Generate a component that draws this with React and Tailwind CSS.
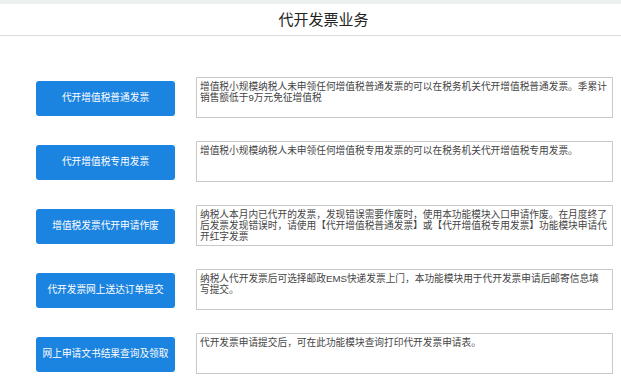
const ROWS = [
    {
        label: '代开增值税普通发票',
        desc: '增值税小规模纳税人未申领任何增值税普通发票的可以在税务机关代开增值税普通发票。季累计销售额低于9万元免征增值税'
    },
    {
        label: '代开增值税专用发票',
        desc: '增值税小规模纳税人未申领任何增值税专用发票的可以在税务机关代开增值税专用发票。'
    },
    {
        label: '增值税发票代开申请作废',
        desc: '纳税人本月内已代开的发票，发现错误需要作废时，使用本功能模块入口申请作废。在月度终了后发票发现错误时，请使用【代开增值税普通发票】或【代开增值税专用发票】功能模块申请代开红字发票'
    },
    {
        label: '代开发票网上送达订单提交',
        desc: '纳税人代开发票后可选择邮政EMS快递发票上门，本功能模块用于代开发票申请后邮寄信息填写提交。'
    },
    {
        label: '网上申请文书结果查询及领取',
        desc: '代开发票申请提交后，可在此功能模块查询打印代开发票申请表。'
    }
];

function App(){
    return (
        <div
            className="w-[621px] h-[386px] bg-white overflow-hidden"
            style={{fontFamily: '"Liberation Sans", "Noto Sans CJK SC", sans-serif'}}
        >
            {/* header */}
            <div className="h-[4px] bg-[#eceff0]"></div>
            <div className="h-[32px] flex items-center justify-center pl-[26px] border-b border-[#dcdcdc]">
                <h1 className="text-[15px] leading-none font-normal text-[#222]">代开发票业务</h1>
            </div>

            {/* rows */}
            <div className="mt-[41px] flex flex-col gap-[23px]">
                {ROWS.map((row) => (
                    <div key={row.label} className="flex items-start pl-[36px]">
                        <button className="mt-[4px] w-[139px] h-[35px] rounded-[3px] bg-[#1b83e0] text-white text-[9.7px] flex items-center justify-center">
                            {row.label}
                        </button>
                        <div className="ml-[21px] w-[417px] h-[41px] border border-[#c9c9c9] pt-[3px] pl-[3px] pr-[5px] text-[9.7px] leading-[11px] text-[#444]">
                            {row.desc}
                        </div>
                    </div>
                ))}
            </div>
        </div>
    )
}

export default App;
